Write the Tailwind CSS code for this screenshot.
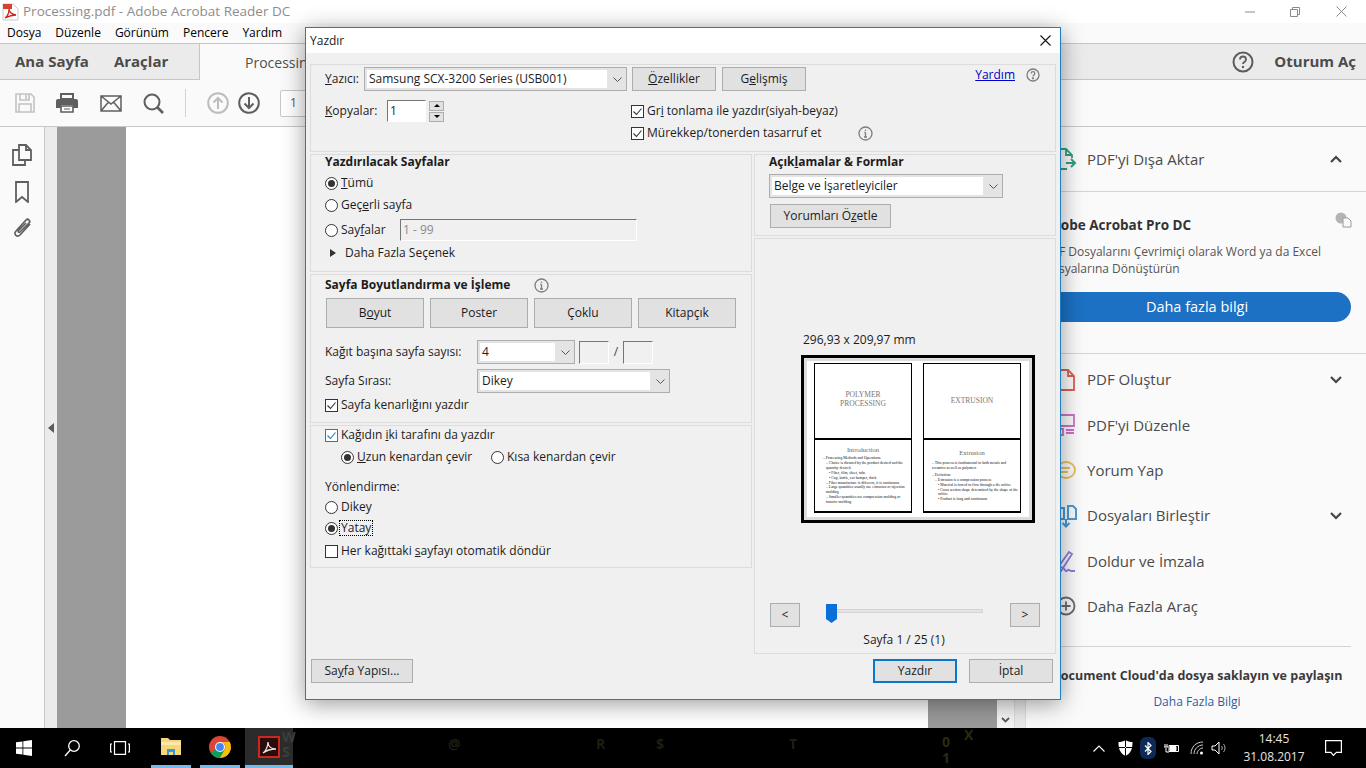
<!DOCTYPE html>
<html lang="tr">
<head>
<meta charset="UTF-8">
<title>Processing.pdf - Adobe Acrobat Reader DC</title>
<script src="https://cdn.jsdelivr.net/npm/@tailwindcss/browser@4"></script>
</head>
<body class="bg-white overflow-hidden">
<div class="relative w-[1366px] h-[768px] overflow-hidden flex flex-col font-['Open_Sans','Noto_Sans',sans-serif] text-[12px] text-[#1c1c1c]">

  <!-- App title bar -->
  <div class="h-[23px] bg-white flex items-center shrink-0 relative">
    <svg class="ml-[2px] mt-[1px]" width="17" height="18" viewBox="0 0 17 18"><path d="M1 1h10l5 5v11H1z" fill="#fff" stroke="#c9c9c9"/><path d="M1 1h9v5H1z" fill="#d8402f"/><path d="M3 15c3-2 4-6 4-9 0 3 2 5 7 6-4 0-7 1-11 3z" fill="none" stroke="#d0201a" stroke-width="1.3"/></svg>
    <span class="ml-[4px] text-[13.5px] text-[#8d8d8d]">Processing.pdf - Adobe Acrobat Reader DC</span>
    <div class="ml-auto flex items-center">
      <svg class="mr-[35px]" width="10" height="10" viewBox="0 0 10 10"><path d="M0 5h10" stroke="#8a8a8a"/></svg>
      <svg class="mr-[36px]" width="10" height="10" viewBox="0 0 10 10"><path d="M.5 2.5h7v7h-7zM2.5 2.5v-2h7v7h-2" fill="none" stroke="#8a8a8a"/></svg>
      <svg class="mr-[19px]" width="11" height="11" viewBox="0 0 11 11"><path d="M.5.5l10 10M10.500.5l-10 10" stroke="#8a8a8a"/></svg>
    </div>
  </div>

  <!-- Menu -->
  <div class="h-[20px] bg-[#fafafa] flex items-center gap-[14px] pl-[7px] shrink-0 text-black">
    <span>Dosya</span><span>Düzenle</span><span>Görünüm</span><span>Pencere</span><span>Yardım</span>
  </div>

  <!-- Tabs -->
  <div class="h-[37px] bg-[#ebebeb] border-y border-[#c6c6c6] flex items-stretch shrink-0">
    <div class="w-[200px] flex items-center pl-[15px] gap-[25px] font-bold text-[15px] text-[#4b4b4b] border-r border-[#c6c6c6]">
      <span>Ana Sayfa</span><span>Araçlar</span>
    </div>
    <div class="w-[300px] bg-[#fafafa] -mb-px pl-[45px] flex items-center text-[14px] text-[#505050]">Processing.pdf</div>
    <div class="ml-auto flex items-center pr-[10px]">
      <svg class="mr-[20px]" width="22" height="22" viewBox="0 0 22 22"><circle cx="11" cy="11" r="9.500" fill="none" stroke="#5c5c5c" stroke-width="2"/><path d="M8 8.500c0-4 6-4 6 0 0 2.500-3 2.500-3 4.500" fill="none" stroke="#5c5c5c" stroke-width="1.800"/><circle cx="11" cy="16" r="1.200" fill="#5c5c5c"/></svg>
      <span class="font-bold text-[15px] text-[#4b4b4b]">Oturum Aç</span>
    </div>
  </div>

  <!-- Toolbar -->
  <div class="h-[47px] bg-[#fafafa] border-b border-[#c8c8c8] flex items-center shrink-0 pl-[15px]">
    <svg width="20" height="20" viewBox="0 0 20 20" fill="none" stroke="#c2c2c2" stroke-width="1.600"><path d="M1 1h15l3 3v15H1z"/><path d="M5 1v6h9V1M11 2v4M4 19v-8h12v8"/></svg>
    <svg class="ml-[21px]" width="22" height="20" viewBox="0 0 22 20"><path d="M5 6V1h12v5z" fill="none" stroke="#5f5f5f" stroke-width="2"/><path d="M2 6h18a2 2 0 012 2v7h-5v-3H5v3H0V8a2 2 0 012-2z" fill="#5f5f5f"/><path d="M5 13h12v6H5z" fill="#fff" stroke="#5f5f5f" stroke-width="1.600"/><path d="M8 16h6" stroke="#5f5f5f"/></svg>
    <svg class="ml-[22px]" width="22" height="17" viewBox="0 0 22 17" fill="none" stroke="#5f5f5f" stroke-width="1.500"><path d="M1 1h20v15H1zM1 1l10 8 10-8M1 16l7.500-9M21 16l-7.500-9"/></svg>
    <svg class="ml-[21px]" width="21" height="21" viewBox="0 0 21 21" fill="none" stroke="#5f5f5f" stroke-width="2"><circle cx="9" cy="9" r="7.500"/><path d="M14.500 14.500l5.500 5.500" stroke-width="2.600"/></svg>
    <div class="ml-[21px] h-[28px] w-px bg-[#d2d2d2]"></div>
    <svg class="ml-[21px]" width="22" height="22" viewBox="0 0 22 22" fill="none" stroke="#bdbdbd" stroke-width="2"><circle cx="11" cy="11" r="9.800"/><path d="M11 17V6M6.500 10.500L11 6l4.500 4.500"/></svg>
    <svg class="ml-[9px]" width="22" height="22" viewBox="0 0 22 22" fill="none" stroke="#5f5f5f" stroke-width="2"><circle cx="11" cy="11" r="9.800"/><path d="M11 5v11M6.500 11.500L11 16l4.500-4.500"/></svg>
    <div class="ml-[20px] w-[40px] h-[27px] bg-white border border-[#c8c8c8] rounded-[2px] pl-[9px] flex items-center text-[#555]">1</div>
  </div>

  <!-- Main -->
  <div class="flex-1 flex min-h-0">
    <div class="w-[45px] bg-[#fafafa] border-r border-[#c8c8c8] shrink-0 flex flex-col items-center pt-[17px]">
      <svg width="20" height="22" viewBox="0 0 20 22" fill="none" stroke="#5f5f5f" stroke-width="1.800"><path d="M7 1h7l5 5v10H7zM14 1v5h5"/><path d="M7 6H1v15h12v-5"/></svg>
      <svg class="mt-[15px]" width="14" height="22" viewBox="0 0 14 22" fill="none" stroke="#5f5f5f" stroke-width="1.800"><path d="M1 1h12v20l-6-5-6 5z"/></svg>
      <svg class="mt-[14px]" width="21" height="22" viewBox="0 0 21 22" fill="none" stroke="#5f5f5f" stroke-width="1.700"><path d="M18 7L8 18c-3 3-7-1-4-4L14 3c2-2 5 1 3 3L8 15c-1 1-2.500 0-1.500-1.500L14 6"/></svg>
    </div>
    <div class="w-[12px] bg-[#ebebeb] shrink-0 flex items-center justify-center">
      <div class="w-0 h-0 border-y-[5px] border-y-transparent border-r-[6px] border-r-[#5a5a5a]"></div>
    </div>
    <div class="w-[69px] bg-[#9b9b9b] shrink-0"></div>
    <div class="w-[802px] bg-white shrink-0"></div>
    <div class="w-[69px] bg-[#9b9b9b] shrink-0"></div>
    <div class="w-[17px] bg-[#f5f5f5] shrink-0 flex flex-col justify-end items-center pb-[5px]">
      <svg width="9" height="6" viewBox="0 0 9 6" fill="none" stroke="#5a5a5a" stroke-width="1.800"><path d="M1 1l3.500 3.500L8 1"/></svg>
    </div>
    <div class="w-[12px] bg-[#ebebeb] border-x border-[#dcdcdc] shrink-0"></div>

    <!-- Right tools panel -->
    <div class="flex-1 bg-[#fafafa] flex flex-col text-[#4b4b4b] text-[15px]">
      <div class="h-[65px] border-b border-[#d4d4d4] flex items-center justify-between pr-[24px] pl-[29px] shrink-0 mt-0">
        <div class="flex items-center">
          <svg width="22" height="24" viewBox="0 0 22 24" fill="none" stroke="#2f9e83" stroke-width="1.800"><path d="M2 10V2h9l6 6v3M11 2v6h6M2 15v7h10" /><path d="M11 16h9M16 12l4 4-4 4" stroke-width="2"/></svg>
          <span class="ml-[10px]">PDF'yi Dışa Aktar</span>
        </div>
        <svg width="12" height="8" viewBox="0 0 12 8" fill="none" stroke="#444" stroke-width="2.200"><path d="M1 7l5-5 5 5"/></svg>
      </div>
      <div class="pl-[17px] pr-[15px] pt-[24px] h-[162px] shrink-0 border-b border-[#d4d4d4] relative">
        <div class="font-bold text-[#333] text-[13.5px] leading-[18px]">Adobe Acrobat Pro DC</div>
        <svg class="absolute right-[14px] top-[20px]" width="17" height="16" viewBox="0 0 17 16"><circle cx="6" cy="6" r="5.500" fill="#b4b4b4"/><path d="M8 6h5l3 3v6H8z" fill="#fafafa" stroke="#9a9a9a"/></svg>
        <div class="mt-[9px] text-[12px] leading-[17px] text-[#555]">PDF Dosyalarını Çevrimiçi olarak Word ya da Excel<br>Dosyalarına Dönüştürün</div>
        <div class="mt-[15px] h-[30px] rounded-full bg-[#1c71c4] text-white text-[14.500px] flex items-center justify-center">Daha fazla bilgi</div>
      </div>
      <div class="pl-[29px] pr-[24px] pt-[3px] h-[293px] shrink-0 border-b border-[#d4d4d4] mr-[15px] [&>div]:h-[45.300px] [&>div]:flex [&>div]:items-center">
        <div><svg width="22" height="24" viewBox="0 0 22 24" fill="none" stroke="#d8604f" stroke-width="1.800"><path d="M2 22V2h11l6 6v14zM13 2v6h6"/></svg><span class="ml-[10px]">PDF Oluştur</span><svg class="ml-auto -mr-[15px]" width="12" height="8" viewBox="0 0 12 8" fill="none" stroke="#444" stroke-width="2.200"><path d="M1 1l5 5 5-5"/></svg></div>
        <div><svg width="22" height="24" viewBox="0 0 22 24" fill="none" stroke="#d070c8" stroke-width="1.800"><path d="M2 2h17v11H2zM2 16h6v6H2zM11 17h8M11 20h8"/></svg><span class="ml-[10px]">PDF'yi Düzenle</span></div>
        <div><svg width="22" height="24" viewBox="0 0 22 24" fill="none" stroke="#e8bd58" stroke-width="1.800"><ellipse cx="11" cy="12" rx="9" ry="8"/><path d="M6 10h9M6 14h7"/></svg><span class="ml-[10px]">Yorum Yap</span></div>
        <div><svg width="22" height="24" viewBox="0 0 22 24" fill="none" stroke="#4a9ad8" stroke-width="2"><path d="M2 4h7v11H2zM13 2h5l3 3v10h-8zM11 15v7M7.500 19l3.500 3.500 3.500-3.500"/></svg><span class="ml-[10px]">Dosyaları Birleştir</span><svg class="ml-auto -mr-[15px]" width="12" height="8" viewBox="0 0 12 8" fill="none" stroke="#444" stroke-width="2.200"><path d="M1 1l5 5 5-5"/></svg></div>
        <div><svg width="22" height="24" viewBox="0 0 22 24" fill="none" stroke="#8d7be0" stroke-width="1.800"><path d="M4 17L14 3l3 2-9 14zM2 22h4c2-3 3-3 4-1s2 1 3 0 2 1 3 1h4"/></svg><span class="ml-[10px]">Doldur ve İmzala</span></div>
        <div><svg width="22" height="24" viewBox="0 0 22 24" fill="none" stroke="#6a6a6a" stroke-width="1.800"><circle cx="11" cy="12" r="8.500"/><path d="M11 7.500v9M6.500 12h9"/></svg><span class="ml-[10px]">Daha Fazla Araç</span></div>
      </div>
      <div class="pt-[20px] text-center pl-[17px] pr-[15px] text-[12.500px] font-bold text-[#3a3a3a] whitespace-nowrap">Document Cloud'da dosya saklayın ve paylaşın</div>
      <div class="mt-[7px] text-center pl-[17px] pr-[15px] text-[12px] text-[#2a5f9f]">Daha Fazla Bilgi</div>
    </div>
  </div>

  <!-- Taskbar -->
  <div class="h-[40px] bg-black shrink-0 flex items-center relative text-white">
    <svg class="ml-[16px]" width="16" height="16" viewBox="0 0 16 16" fill="#fff"><path d="M0 2.300l6.500-.9v6.200H0zM7.300 1.300L16 0v7.600H7.300zM0 8.400h6.500v6.200L0 13.700zM7.300 8.400H16V16l-8.700-1.200z"/></svg>
    <svg class="ml-[32px]" width="16" height="17" viewBox="0 0 16 17" fill="none" stroke="#fff" stroke-width="1.300"><circle cx="10" cy="6" r="5.300"/><path d="M6.300 10L1 16"/></svg>
    <svg class="ml-[30px]" width="20" height="14" viewBox="0 0 20 14" fill="none" stroke="#fff" stroke-width="1.200"><path d="M4.500.6h11v12.800h-11zM2 3H.6v8H2M18 3h1.400v8H18"/></svg>
    <div class="w-[40px] ml-[21px] h-full relative flex items-center justify-center border-b-[3px] border-[#76b9ed]">
      <svg width="22" height="19" viewBox="0 0 22 19"><path d="M1 1h7l2 2h11v15H1z" fill="#f6d678"/><path d="M1 5h20v3H1z" fill="#fbe8ad"/><path d="M7 18v-6h8v6h-2v-3H9v3z" fill="#2f9bd8"/></svg>
    </div>
    <div class="w-[40px] ml-[9px] h-full flex items-center justify-center border-b-[3px] border-[#76b9ed]">
      <svg width="22" height="22" viewBox="0 0 22 22"><circle cx="11" cy="11" r="11" fill="#db4437"/><path d="M11 11L1.500 16.500A11 11 0 0011 22l5-9z" fill="#0f9d58"/><path d="M11 6h9.700A11 11 0 0111 22l5-9a5 5 0 00-5-7z" fill="#f4c20d"/><circle cx="11" cy="11" r="5" fill="#fff"/><circle cx="11" cy="11" r="3.900" fill="#4285f4"/></svg>
    </div>
    <div class="w-[48px] ml-[5px] h-full bg-[#2b2b2b] flex items-center justify-center border-b-[3px] border-[#76b9ed]">
      <svg width="22" height="22" viewBox="0 0 22 22"><rect x="1" y="1" width="20" height="20" fill="#2a0c0a" stroke="#c8281e" stroke-width="2"/><path d="M5 17c3-2 5-7 5-11 0 4 3 7 8 7-5 0-9 1-13 4z" fill="none" stroke="#e8e0e0" stroke-width="1.300"/></svg>
    </div>
    <span class="absolute left-[282px] top-[1px] text-[14px] leading-[15px] font-bold text-[#3a3f3a]">W<br>S</span>
    <span class="absolute left-[448px] top-[5px] text-[14px] font-bold text-[#1d1f12]">@</span>
    <span class="absolute left-[596px] top-[5px] text-[14px] font-bold text-[#1d1f12]">R</span>
    <span class="absolute left-[656px] top-[5px] text-[14px] font-bold text-[#1d1f12]">$</span>
    <span class="absolute left-[789px] top-[5px] text-[14px] font-bold text-[#1d1f12]">T</span>
    <span class="absolute left-[942px] top-[6px] text-[14px] leading-[16px] font-bold text-[#2b2b12]">0<br>1</span>
    <span class="absolute left-[964px] top-[-4px] text-[14px] font-bold text-[#2b2b12]">X</span>

    <div class="ml-auto flex items-center h-full">
      <svg width="12" height="7" viewBox="0 0 12 7" fill="none" stroke="#fff" stroke-width="1.100"><path d="M.5 6.500l5.500-5.500 5.500 5.500"/></svg>
      <svg class="ml-[13px]" width="15" height="16" viewBox="0 0 15 16"><path d="M7.500 0c2 1.500 4.500 2 7 2 0 6-1 11-7 14-6-3-7-8-7-14 2.500 0 5-.5 7-2z" fill="#fff"/><path d="M7 0v16h1V0zM0 7h15v1H0z" fill="#000"/></svg>
      <div class="ml-[7px] w-[16px] h-[22px] bg-[#0d2a55] rounded-[6px] flex items-center justify-center">
        <svg width="8" height="13" viewBox="0 0 8 13" fill="none" stroke="#fff" stroke-width="1.200"><path d="M1 3.500l6 6-3 3V.5l3 3-6 6"/></svg>
      </div>
      <svg class="ml-[8px]" width="16" height="12" viewBox="0 0 16 12" fill="none" stroke="#fff"><path d="M5 3.500h9.500v6H5zM1 2v3M3 2v3M0 5h4M2 6v4h3" /><path d="M6 4.500h6v4H6z" fill="#fff"/></svg>
      <svg class="ml-[10px]" width="14" height="14" viewBox="0 0 14 14" fill="none" stroke="#ccc" stroke-width="1"><path d="M1 13C1 6 6 1 13 1M4 13c0-5 4-9 9-9M7 13c0-3 3-6 6-6"/><circle cx="11.500" cy="12" r="1.500" fill="#fff" stroke="none"/></svg>
      <svg class="ml-[7px]" width="17" height="14" viewBox="0 0 17 14" fill="none" stroke="#fff" stroke-width="1"><path d="M1 5h3l4-4v12l-4-4H1z"/><path d="M10.500 5c1 1 1 3 0 4M12.500 3c2 2 2 6 0 8" stroke="#aaa"/></svg>
      <div class="ml-[13px] w-[66px] text-center text-[12px] leading-[18px] text-white/90">14:45<br>31.08.2017</div>
      <svg class="ml-[18px] mr-[24px]" width="17" height="16" viewBox="0 0 17 16" fill="none" stroke="#fff" stroke-width="1.200"><path d="M.6.6h15.800v11.800h-5l-3 3-2.500-3H.6z"/></svg>
    </div>
  </div>

  <!-- Print dialog -->
  <div class="absolute left-[305px] top-[27px] w-[756px] h-[673px] border border-[#1c7fc4] bg-[#f0f0f0] shadow-[0_4px_22px_rgba(0,0,0,0.4)] flex flex-col text-[12px] text-[#1c1c1c]">
    <div class="h-[25px] bg-white flex items-center justify-between pl-[4px] pr-[9px] shrink-0">
      <span>Yazdır</span>
      <svg width="11" height="11" viewBox="0 0 11 11"><path d="M.5.5l10 10M10.500.5l-10 10" stroke="#111" stroke-width="1.100"/></svg>
    </div>
    <div class="flex-1 pl-[4px] pr-[4px] pt-[11px] flex flex-col">

      <!-- Printer -->
      <div class="h-[88px] border border-[#dcdcdc] shrink-0 pl-[14px] pr-[15px] pt-[2px]">
        <div class="flex items-center h-[24px]">
          <span class="w-[39px]"><span class="underline">Y</span>azıcı:</span>
          <div class="w-[263px] h-[24px] border border-[#adadad] bg-[#e4e4e4] flex items-center p-[2px]">
            <div class="w-[240px] h-full bg-white pl-[2px] flex items-center">Samsung SCX-3200 Series (USB001)</div>
            <svg class="ml-[6px]" width="9" height="5" viewBox="0 0 9 5" fill="none" stroke="#555"><path d="M.5.500l4 4 4-4"/></svg>
          </div>
          <div class="ml-[5px] w-[84px] h-[24px] border border-[#adadad] bg-[#e1e1e1] flex items-center justify-center"><span><span class="underline">Ö</span>zellikler</span></div>
          <div class="ml-[6px] w-[84px] h-[24px] border border-[#adadad] bg-[#e1e1e1] flex items-center justify-center"><span>G<span class="underline">e</span>lişmiş</span></div>
          <span class="ml-auto text-[#0000c8] underline -mt-[8px]">Yardım</span>
          <svg class="ml-[11px] -mt-[8px]" width="14" height="14" viewBox="0 0 14 14" fill="none" stroke="#7d7d7d" stroke-width="1.300"><circle cx="7" cy="7" r="6"/><path d="M5.200 5.500c0-2.400 3.600-2.400 3.600 0 0 1.400-1.800 1.400-1.800 3"/><circle cx="7" cy="10.300" r=".5" fill="#7d7d7d"/></svg>
        </div>
        <div class="flex mt-[9px]">
          <div class="flex h-[22px] w-[306px] items-center">
            <span class="w-[62px]"><span class="underline">K</span>opyalar:</span>
            <div class="w-[39px] h-[22px] bg-white border-t border-l border-[#767676] border-r border-b border-r-[#fff] border-b-[#fff] pl-[2px] flex items-center">1</div>
            <div class="ml-[3px] flex flex-col gap-[1px]">
              <div class="w-[15px] h-[10px] bg-[#e1e1e1] border border-[#adadad] flex items-center justify-center"><div class="w-0 h-0 border-x-[3px] border-x-transparent border-b-[3px] border-b-black"></div></div>
              <div class="w-[15px] h-[10px] bg-[#e1e1e1] border border-[#adadad] flex items-center justify-center"><div class="w-0 h-0 border-x-[3px] border-x-transparent border-t-[3px] border-t-black"></div></div>
            </div>
          </div>
          <div class="flex flex-col gap-[6px] pt-[3px]">
            <div class="flex items-center h-[16px] gap-[3px]">
              <svg width="13" height="13" viewBox="0 0 13 13"><rect x=".5" y=".5" width="12" height="12" fill="#fff" stroke="#333"/><path d="M2.500 6.500l3 3 5-6" fill="none" stroke="#333" stroke-width="1.100"/></svg>
              <span>Gr<span class="underline">i</span> tonlama ile yazdır(siyah-beyaz)</span>
            </div>
            <div class="flex items-center h-[16px] gap-[3px]">
              <svg width="13" height="13" viewBox="0 0 13 13"><rect x=".5" y=".5" width="12" height="12" fill="#fff" stroke="#333"/><path d="M2.500 6.500l3 3 5-6" fill="none" stroke="#333" stroke-width="1.100"/></svg>
              <span>Mürekkep/tonerden tasarruf et</span>
              <svg class="ml-[33px]" width="15" height="15" viewBox="0 0 15 15" fill="none" stroke="#7d7d7d" stroke-width="1.300"><circle cx="7.500" cy="7.500" r="6.500"/><path d="M7.500 6.500v4.500M6 11h3M6.300 6.500h1.200" /><circle cx="7.500" cy="4.200" r=".8" fill="#7d7d7d" stroke="none"/></svg>
            </div>
          </div>
        </div>
      </div>

      <div class="h-[500px] mt-[2px] flex gap-[2px] shrink-0">
        <!-- Left column -->
        <div class="w-[442px] flex flex-col shrink-0">
          <div class="h-[118px] border border-[#dcdcdc] pl-[14px] shrink-0">
            <div class="font-bold h-[14px] flex items-center">Yazdırılacak Sayfalar</div>
            <div class="mt-[3px] h-[22px] flex items-center gap-[3px]">
              <svg width="13" height="13" viewBox="0 0 13 13"><circle cx="6.500" cy="6.500" r="6" fill="#fff" stroke="#333"/><circle cx="6.500" cy="6.500" r="3.500" fill="#333"/></svg>
              <span><span class="underline">T</span>ümü</span>
            </div>
            <div class="h-[22px] flex items-center gap-[3px]">
              <svg width="13" height="13" viewBox="0 0 13 13"><circle cx="6.500" cy="6.500" r="6" fill="#fff" stroke="#333"/></svg>
              <span>Geç<span class="underline">e</span>rli sayfa</span>
            </div>
            <div class="mt-[3px] h-[22px] flex items-center gap-[3px]">
              <svg width="13" height="13" viewBox="0 0 13 13"><circle cx="6.500" cy="6.500" r="6" fill="#fff" stroke="#333"/></svg>
              <span class="w-[56px]">Say<span class="underline">f</span>alar</span>
              <div class="w-[237px] h-[22px] border-t border-l border-[#767676] border-r border-b border-r-[#fff] border-b-[#fff] pl-[2px] flex items-center text-[#8a8a8a]">1 - 99</div>
            </div>
            <div class="mt-[1px] h-[22px] flex items-center pl-[5px]">
              <div class="w-0 h-0 border-y-[4px] border-y-transparent border-l-[6px] border-l-[#333]"></div>
              <span class="ml-[9px]">Daha Fazla Seçenek</span>
            </div>
          </div>

          <div class="h-[149px] mt-[2px] border border-[#dcdcdc] pl-[14px] pt-[2px] shrink-0">
            <div class="flex items-center h-[16px]">
              <span class="font-bold">Sayfa Boyutlandırma ve İşleme</span>
              <svg class="ml-[24px]" width="15" height="15" viewBox="0 0 15 15" fill="none" stroke="#7d7d7d" stroke-width="1.300"><circle cx="7.500" cy="7.500" r="6.500"/><path d="M7.500 6.500v4.500M6 11h3M6.300 6.500h1.200"/><circle cx="7.500" cy="4.200" r=".8" fill="#7d7d7d" stroke="none"/></svg>
            </div>
            <div class="mt-[5px] flex gap-[6px] pl-[1px]">
              <div class="w-[98px] h-[30px] border border-[#adadad] bg-[#e1e1e1] flex items-center justify-center"><span>B<span class="underline">o</span>yut</span></div>
              <div class="w-[98px] h-[30px] border border-[#adadad] bg-[#e1e1e1] flex items-center justify-center">Poster</div>
              <div class="w-[98px] h-[30px] border border-[#adadad] bg-[#e1e1e1] flex items-center justify-center">Çoklu</div>
              <div class="w-[98px] h-[30px] border border-[#adadad] bg-[#e1e1e1] flex items-center justify-center">Kitapçık</div>
            </div>
            <div class="mt-[12px] flex items-center h-[24px]">
              <span class="w-[152px]">Kağıt başına sayfa sayısı:</span>
              <div class="w-[98px] h-[24px] border border-[#adadad] bg-[#e4e4e4] flex items-center p-[2px]">
                <div class="w-[75px] h-full bg-white pl-[2px] flex items-center">4</div>
                <svg class="ml-[6px]" width="9" height="5" viewBox="0 0 9 5" fill="none" stroke="#555"><path d="M.5.500l4 4 4-4"/></svg>
              </div>
              <div class="ml-[4px] w-[30px] h-[23px] border-t border-l border-[#767676] border-r border-b border-r-[#fff] border-b-[#fff]"></div>
              <span class="w-[14px] text-center text-[#444]">/</span>
              <div class="w-[30px] h-[23px] border-t border-l border-[#767676] border-r border-b border-r-[#fff] border-b-[#fff]"></div>
            </div>
            <div class="mt-[5px] flex items-center h-[24px]">
              <span class="w-[152px]">Sayfa Sırası:</span>
              <div class="w-[193px] h-[24px] border border-[#adadad] bg-[#e4e4e4] flex items-center p-[2px]">
                <div class="w-[170px] h-full bg-white pl-[2px] flex items-center">Dikey</div>
                <svg class="ml-[6px]" width="9" height="5" viewBox="0 0 9 5" fill="none" stroke="#555"><path d="M.5.500l4 4 4-4"/></svg>
              </div>
            </div>
            <div class="mt-[4px] h-[16px] flex items-center gap-[3px]">
              <svg width="13" height="13" viewBox="0 0 13 13"><rect x=".5" y=".5" width="12" height="12" fill="#fff" stroke="#333"/><path d="M2.500 6.500l3 3 5-6" fill="none" stroke="#333" stroke-width="1.100"/></svg>
              <span>Sayfa kenarlığını yazdır</span>
            </div>
          </div>

          <div class="h-[143px] mt-[2px] border border-[#dcdcdc] pl-[14px] pt-[1px] shrink-0">
            <div class="h-[16px] flex items-center gap-[3px]">
              <svg width="13" height="13" viewBox="0 0 13 13"><rect x=".5" y=".5" width="12" height="12" fill="#fff" stroke="#1c7fc4"/><path d="M2.500 6.500l3 3 5-6" fill="none" stroke="#1c7fc4" stroke-width="1.100"/></svg>
              <span>Kağıdın <span class="underline">i</span>ki tarafını da yazdır</span>
            </div>
            <div class="mt-[6px] h-[16px] flex items-center pl-[16px]">
              <svg width="13" height="13" viewBox="0 0 13 13"><circle cx="6.500" cy="6.500" r="6" fill="#fff" stroke="#333"/><circle cx="6.500" cy="6.500" r="3.500" fill="#333"/></svg>
              <span class="ml-[3px] w-[134px]"><span class="underline">U</span>zun kenardan çevir</span>
              <svg width="13" height="13" viewBox="0 0 13 13"><circle cx="6.500" cy="6.500" r="6" fill="#fff" stroke="#333"/></svg>
              <span class="ml-[3px]">Kısa kenardan çevir</span>
            </div>
            <div class="mt-[14px] h-[16px] flex items-center">Yönlendirme:</div>
            <div class="mt-[4px] h-[16px] flex items-center gap-[3px]">
              <svg width="13" height="13" viewBox="0 0 13 13"><circle cx="6.500" cy="6.500" r="6" fill="#fff" stroke="#333"/></svg>
              <span>Dikey</span>
            </div>
            <div class="mt-[5px] h-[16px] flex items-center gap-[2px]">
              <svg width="13" height="13" viewBox="0 0 13 13"><circle cx="6.500" cy="6.500" r="6" fill="#fff" stroke="#333"/><circle cx="6.500" cy="6.500" r="3.500" fill="#333"/></svg>
              <span class="outline-1 outline-dotted outline-black leading-[14px] px-px">Yatay</span>
            </div>
            <div class="mt-[7px] h-[16px] flex items-center gap-[3px]">
              <svg width="13" height="13" viewBox="0 0 13 13"><rect x=".5" y=".5" width="12" height="12" fill="#fff" stroke="#333"/></svg>
              <span>Her kağıttaki <span class="underline">s</span>ayfayı otomatik döndür</span>
            </div>
          </div>
        </div>

        <!-- Right column -->
        <div class="w-[302px] flex flex-col shrink-0">
          <div class="h-[82px] border border-[#dcdcdc] pl-[14px] shrink-0">
            <div class="font-bold h-[14px] flex items-center">Açık<span class="underline">l</span>amalar &amp; Formlar</div>
            <div class="mt-[5px] w-[234px] h-[24px] border border-[#adadad] bg-[#e4e4e4] flex items-center p-[2px]">
              <div class="w-[211px] h-full bg-white pl-[2px] flex items-center">Belge ve İşaretleyiciler</div>
              <svg class="ml-[6px]" width="9" height="5" viewBox="0 0 9 5" fill="none" stroke="#555"><path d="M.5.500l4 4 4-4"/></svg>
            </div>
            <div class="mt-[6px] ml-[1px] w-[121px] h-[24px] border border-[#adadad] bg-[#e1e1e1] flex items-center justify-center"><span>Yorumları Ö<span class="underline">z</span>etle</span></div>
          </div>
          <div class="h-[416px] mt-[2px] border border-[#dcdcdc] shrink-0 pt-[93px]">
            <div class="h-[16px] pl-[48px] flex items-center">296,93 x 209,97 mm</div>
            <!-- Thumbnail -->
            <div class="mt-[7px] ml-[46px] w-[234px] h-[168px] border-[3px] border-black bg-[#dcdcdc] p-[3px]">
              <div class="w-[222px] h-[156px] bg-white pl-[7px] pt-[2px]">
                <div class="grid grid-cols-[98px_98px] gap-x-[11px] font-['Liberation_Serif',serif] text-[#111]">
                  <div class="h-[75px] border border-b-0 border-black flex items-center justify-center text-center text-[7.5px] leading-[9px] text-[#777]"><span class="-mt-[5px]">POLYMER<br>PROCESSING</span></div>
                  <div class="h-[75px] border border-b-0 border-black flex items-center justify-center text-[7.5px] text-[#777]"><span class="-mt-[1px]">EXTRUSION</span></div>
                  <div class="h-[75px] border-x border-y-2 border-black overflow-hidden">
                    <div class="text-center text-[6.5px] leading-[8px] text-[#666] mt-[6px]">Introduction</div>
                    <div class="mt-[2px] pl-[8px] pr-[2px] text-[3.8px] leading-[4.900px]">
                      <div>– Processing Methods and Operations</div>
                      <div class="pl-[3px]">– Choice is dictated by the product desired and the quantity desired.</div>
                      <div class="pl-[6px]">• Fiber, film, sheet, tube</div>
                      <div class="pl-[6px]">• Cup, bottle, car bumper, dock</div>
                      <div class="pl-[3px]">– Fiber manufacture is different, it is continuous</div>
                      <div class="pl-[3px]">– Large quantities usually use extrusion or injection molding</div>
                      <div class="pl-[3px]">– Smaller quantities use compression molding or transfer molding</div>
                    </div>
                  </div>
                  <div class="h-[75px] border-x border-y-2 border-black overflow-hidden">
                    <div class="text-center text-[6.5px] leading-[8px] text-[#666] mt-[9px]">Extrusion</div>
                    <div class="mt-[4px] pl-[8px] pr-[2px] text-[3.8px] leading-[4.900px]">
                      <div>– This process is fundamental to both metals and ceramics as well as polymers</div>
                      <div class="mt-[2px]">– Definition</div>
                      <div class="pl-[3px]">– Extrusion is a compression process</div>
                      <div class="pl-[6px]">• Material is forced to flow through a die orifice</div>
                      <div class="pl-[6px]">• Cross section shape determined by the shape of the orifice</div>
                      <div class="pl-[6px]">• Product is long and continuous</div>
                    </div>
                  </div>
                </div>
              </div>
            </div>
            <!-- Pager -->
            <div class="mt-[80px] ml-[15px] w-[270px] h-[24px] flex items-center">
              <div class="w-[30px] h-[24px] border border-[#adadad] bg-[#e1e1e1] flex items-center justify-center">&lt;</div>
              <div class="relative ml-[26px] w-[157px] h-[4px] bg-[#e4e4e4] border border-[#d4d4d4] -mt-[9px]">
                <svg class="absolute -left-[1px] -top-[6px]" width="11" height="19" viewBox="0 0 11 19"><path d="M0 0h11v15l-5.500 4L0 15z" fill="#0a6fd8"/></svg>
              </div>
              <div class="ml-[27px] w-[30px] h-[24px] border border-[#adadad] bg-[#e1e1e1] flex items-center justify-center">&gt;</div>
            </div>
            <div class="mt-[5px] h-[16px] text-center pr-[2px] flex items-center justify-center">Sayfa 1 / 25 (1)</div>
          </div>
        </div>
      </div>

      <!-- Footer buttons -->
      <div class="mt-[5px] flex pl-[1px] pr-[3px]">
        <div class="w-[102px] h-[24px] border border-[#adadad] bg-[#e1e1e1] flex items-center justify-center"><span>Sa<span class="underline">y</span>fa Yapısı...</span></div>
        <div class="ml-auto w-[84px] h-[24px] border-2 border-[#0a78c8] bg-[#e1e1e1] flex items-center justify-center">Yazdır</div>
        <div class="ml-[12px] w-[84px] h-[24px] border border-[#adadad] bg-[#e1e1e1] flex items-center justify-center">İptal</div>
      </div>
    </div>
  </div>
</div>
</body>
</html>
